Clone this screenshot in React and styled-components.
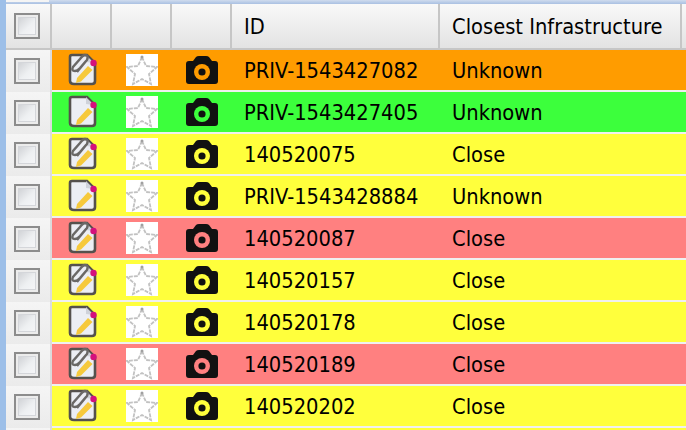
import styled, { createGlobalStyle } from "styled-components";

const rows = [
  { id: "PRIV-1543427082", infra: "Unknown", tone: "orange", clip: true },
  { id: "PRIV-1543427405", infra: "Unknown", tone: "green", clip: false },
  { id: "140520075", infra: "Close", tone: "yellow", clip: true },
  { id: "PRIV-1543428884", infra: "Unknown", tone: "yellow", clip: false },
  { id: "140520087", infra: "Close", tone: "red", clip: true },
  { id: "140520157", infra: "Close", tone: "yellow", clip: true },
  { id: "140520178", infra: "Close", tone: "yellow", clip: false },
  { id: "140520189", infra: "Close", tone: "red", clip: true },
  { id: "140520202", infra: "Close", tone: "yellow", clip: true },
];

const tones = {
  orange: "#ff9c00",
  green: "#3cff3c",
  yellow: "#ffff3c",
  red: "#ff8080",
};

const GlobalStyle = createGlobalStyle`
  html, body {
    margin: 0;
    height: 100%;
    overflow: hidden;
    background: #9dbfe8;
  }
`;

const Page = styled.div`
  height: 430px;
  overflow: hidden;
  box-sizing: border-box;
  padding-left: 6px;
  font-family: "DejaVu Sans Condensed", "DejaVu Sans", sans-serif;
  font-stretch: condensed;
  font-size: 21.7px;
  color: #000;
`;

const TopStrip = styled.div`
  height: 4px;
  background: linear-gradient(#d0dcee, #a9c0e2);
`;

const TopTab = styled.div`
  width: 43px;
  height: 2px;
  background: #f4f4f4;
`;

const Grid = styled.div`
  width: 690px;
  display: grid;
  grid-template-columns: 46px 60px 60px 60px 208px 242px 14px;
  grid-template-rows: 46px;
  grid-auto-rows: 42px;
  background: #f0f0f0;
`;

const HeaderRow = styled.div`
  grid-column: 1 / -1;
  display: grid;
  grid-template-columns: subgrid;
  background: linear-gradient(#f9f9f9, #e3e3e3);
  border-bottom: 2px solid #c6c6c6;
  box-sizing: border-box;
`;

const HeaderCell = styled.div`
  display: flex;
  align-items: center;
  padding: 0 0 0 12px;
  border-right: 2px solid #c6c6c6;
  box-sizing: border-box;
  &:last-child {
    border-right: 0;
  }
`;

const CheckCell = styled.div`
  display: flex;
  align-items: center;
  justify-content: center;
  padding-right: 3px;
  box-sizing: border-box;
  border-right: 2px solid ${(p) => (p.$head ? "#c6c6c6" : "#dcdcdc")};
  background: ${(p) =>
    p.$head ? "transparent" : "linear-gradient(#f5f5f5, #ebebeb)"};
`;

const Check = styled.span`
  display: block;
  width: 22px;
  height: 22px;
  border: 2px solid #8c8c8c;
  background: linear-gradient(135deg, #c8cace, #eef0f2 55%, #f8f8fa);
  box-shadow: inset 0 0 0 2px #ececec, inset 0 0 0 3px #d4d6da;
`;

const Row = styled.div`
  grid-column: 1 / -1;
  display: grid;
  grid-template-columns: subgrid;
  height: 42px;
`;

const Cell = styled.div`
  display: flex;
  align-items: center;
  height: 40px;
  background: ${(p) => tones[p.$tone]};
  justify-content: ${(p) => (p.$icon ? "center" : "flex-start")};
  padding-left: ${(p) => (p.$icon ? "0" : "12px")};
  box-sizing: border-box;
`;

const IconWrap = styled.svg`
  display: block;
  filter: blur(0.6px);
`;

const StarBox = styled.svg`
  display: block;
  background: #fff;
`;

const NoteIcon = ({ clip }) => (
  <IconWrap width="32" height="34" viewBox="0 0 32 34">
    <path
      d="M6 2H21L29 10V28Q29 31 26 31H8Q4 31 4 28V4Q4 2 6 2Z"
      fill="#eceef4"
      stroke="#55514d"
      strokeWidth="2.6"
    />
    <path d="M20 2V9L28 10Z" fill="#cfd2da" />
    {clip && (
      <path
        d="M11 19L21 7Q23 2 19 2Q17 2 14 6L7 14Q5 18 9 18Q11 18 14 15L20 8"
        fill="none"
        stroke="#6a6866"
        strokeWidth="2.4"
      />
    )}
    <path d="M11 25L22 13L26.5 17L15 28.5L10 30Z" fill="#f6c93c" />
    <circle cx="27.5" cy="10" r="3.2" fill="#d4107c" />
  </IconWrap>
);

const StarIcon = () => (
  <StarBox width="32" height="32" viewBox="0 0 32 32">
    <g filter="blur(0.5px)">
      <path
        d="M16 3L20 12L31 13L23 20L25 30L16 25L7 30L9 20L1 13L12 12Z"
        fill="#fff"
        stroke="#c2c2c2"
        strokeWidth="1.8"
        strokeDasharray="4 1"
      />
      <circle cx="16" cy="3" r="1.5" fill="#a0a0a0" />
    </g>
  </StarBox>
);

const CameraIcon = ({ tone }) => (
  <IconWrap width="34" height="30" viewBox="0 0 34 30">
    <path
      d="M4 6H8L11 2Q12 1 14 1H21Q23 1 24 2L27 6H30Q33 6 33 9V26Q33 29 30 29H4Q1 29 1 26V9Q1 6 4 6Z"
      fill="#111"
    />
    <circle cx="17" cy="17" r="8" fill={tones[tone]} />
    <circle cx="17" cy="17" r="3.6" fill="#111" />
  </IconWrap>
);

export default function App() {
  return (
    <Page>
      <GlobalStyle />
      <TopStrip>
        <TopTab />
      </TopStrip>
      <Grid>
        <HeaderRow>
          <CheckCell $head>
            <Check />
          </CheckCell>
          <HeaderCell />
          <HeaderCell />
          <HeaderCell />
          <HeaderCell>ID</HeaderCell>
          <HeaderCell>Closest Infrastructure</HeaderCell>
          <HeaderCell />
        </HeaderRow>
        {rows.map((row) => (
          <Row key={row.id}>
            <CheckCell>
              <Check />
            </CheckCell>
            <Cell $tone={row.tone} $icon>
              <NoteIcon clip={row.clip} />
            </Cell>
            <Cell $tone={row.tone} $icon>
              <StarIcon />
            </Cell>
            <Cell $tone={row.tone} $icon>
              <CameraIcon tone={row.tone} />
            </Cell>
            <Cell $tone={row.tone}>{row.id}</Cell>
            <Cell $tone={row.tone}>{row.infra}</Cell>
            <Cell $tone={row.tone} />
          </Row>
        ))}
        <Row>
          <CheckCell />
          <Cell $tone="yellow" />
          <Cell $tone="yellow" />
          <Cell $tone="yellow" />
          <Cell $tone="yellow" />
          <Cell $tone="yellow" />
          <Cell $tone="yellow" />
        </Row>
      </Grid>
    </Page>
  );
}
